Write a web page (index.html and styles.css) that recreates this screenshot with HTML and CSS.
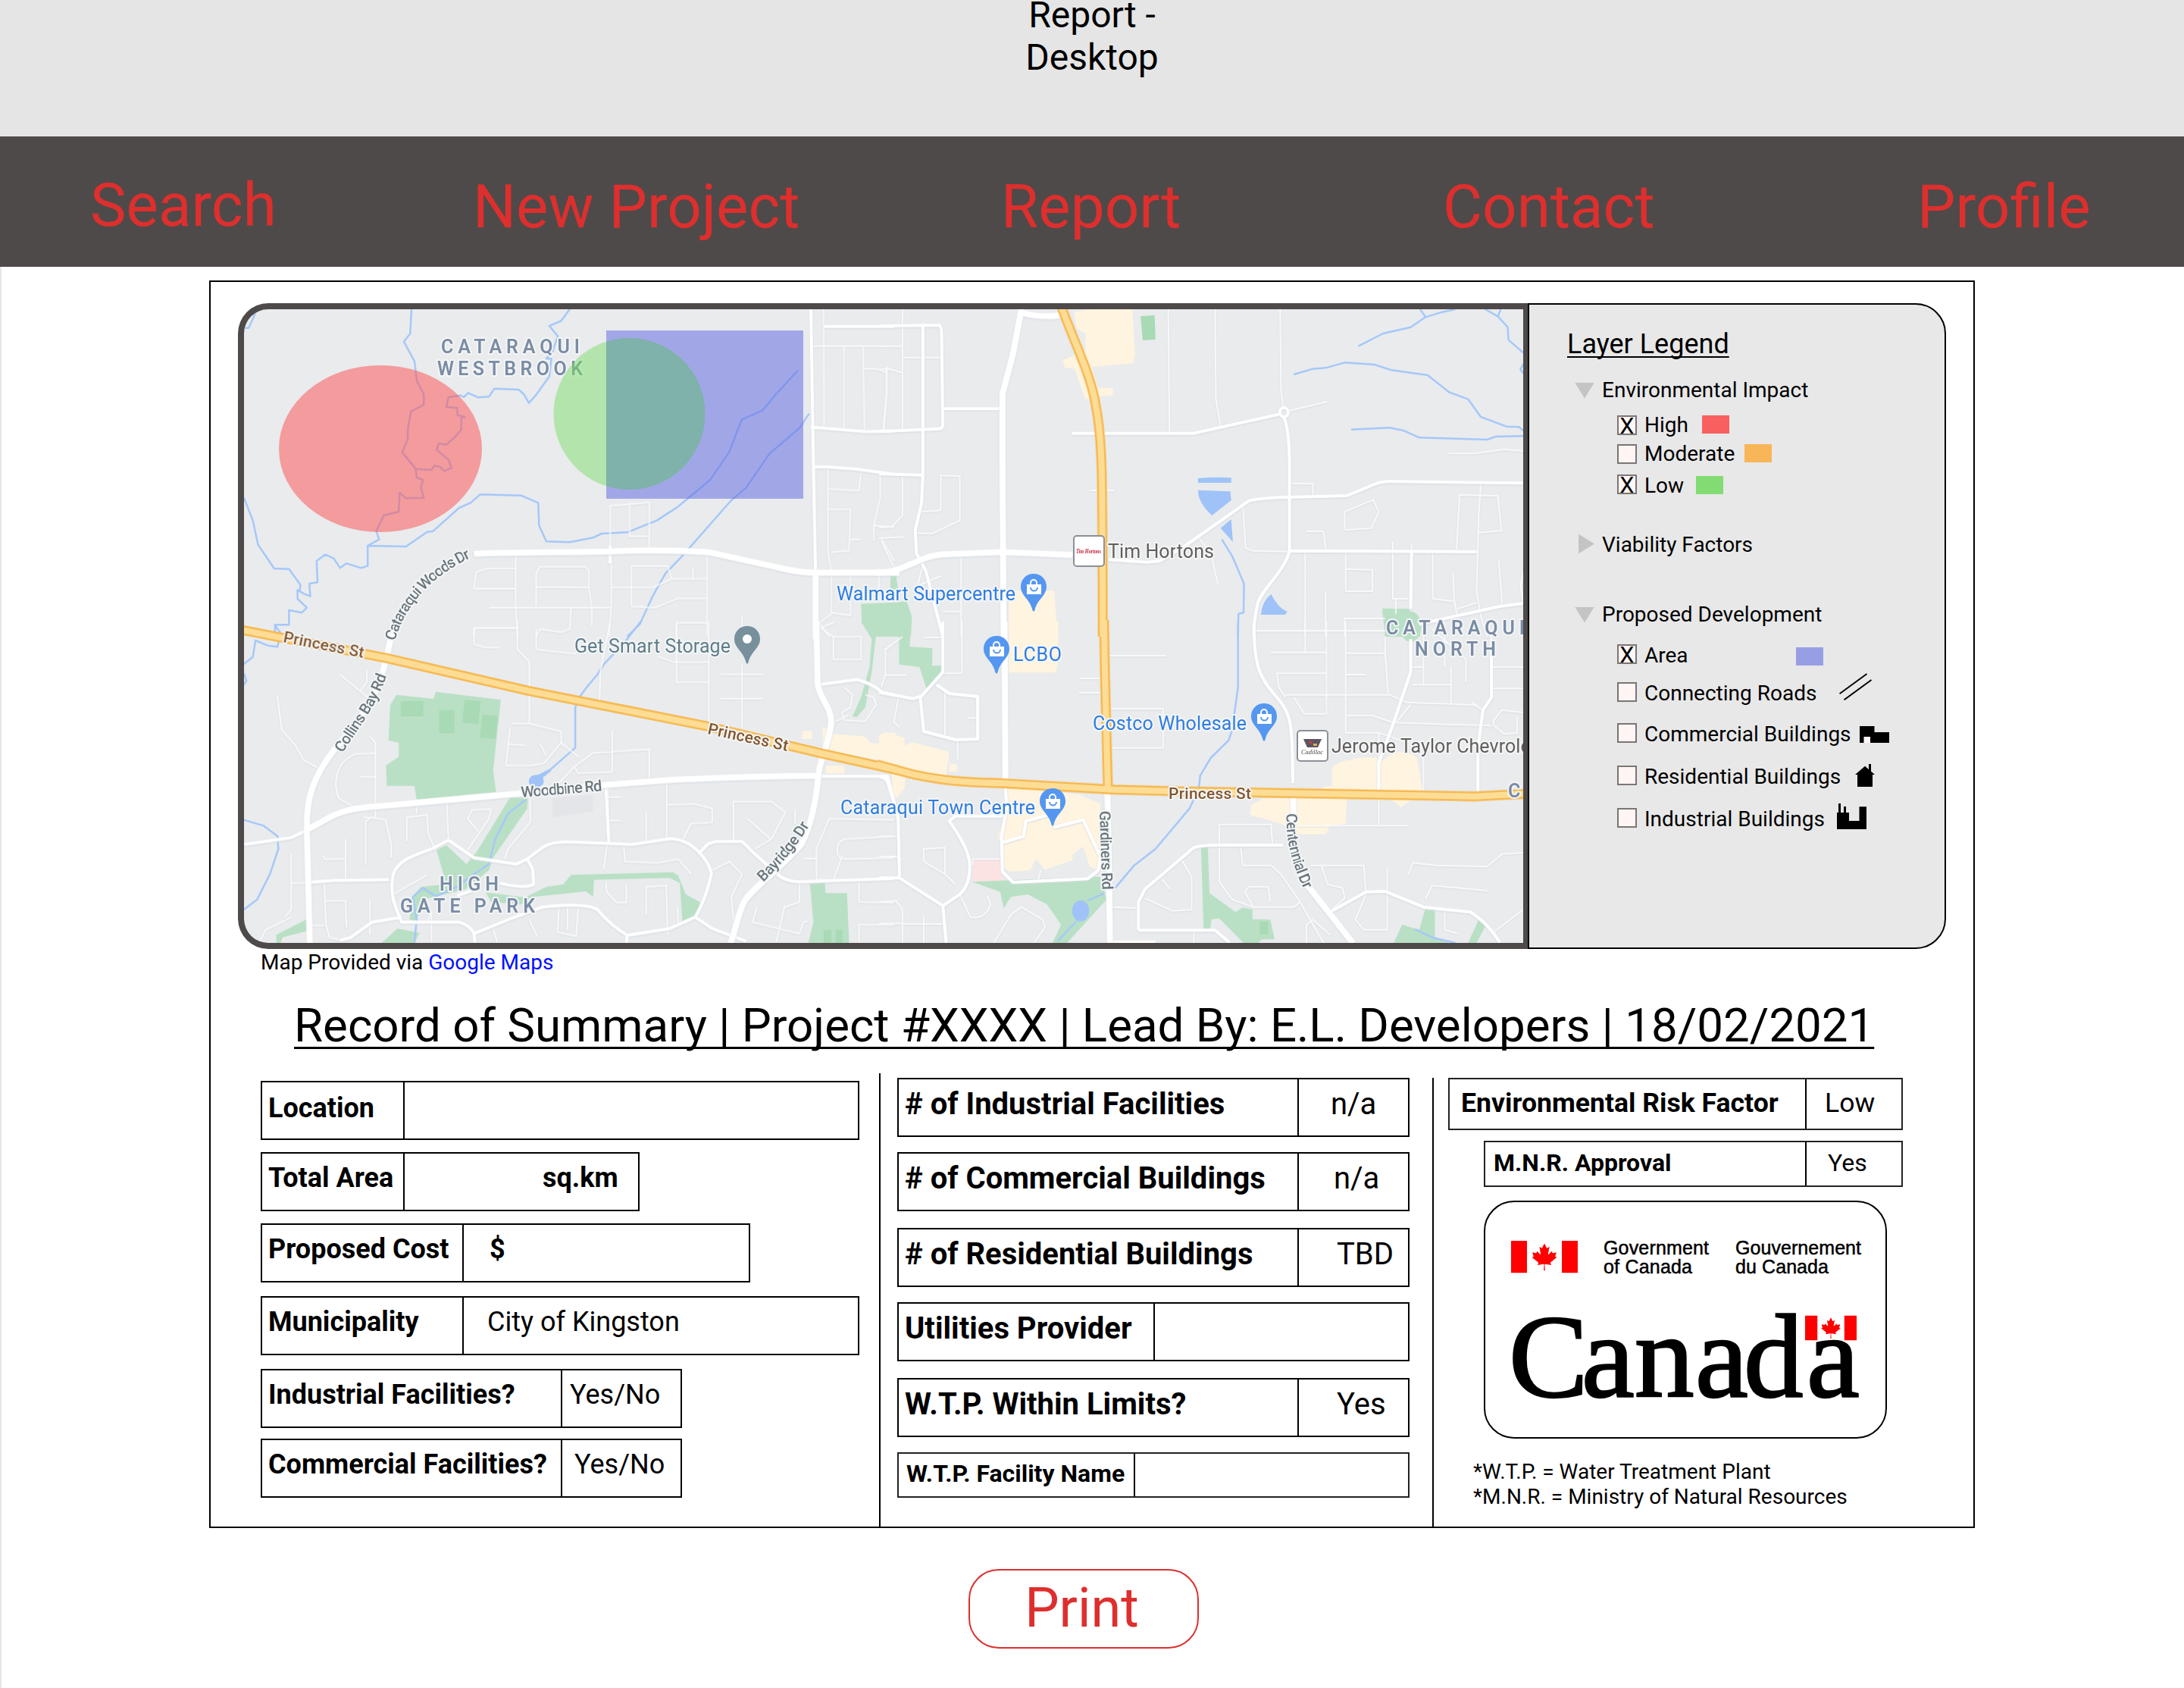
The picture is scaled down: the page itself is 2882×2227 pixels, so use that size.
FILE: index.html
```html
<!DOCTYPE html>
<html lang="en">
<head>
<meta charset="utf-8">
<title>Report - Desktop</title>
<link rel="stylesheet" href="styles.css">
</head>
<body>
<svg class="defs" aria-hidden="true">
  <symbol id="flag" viewBox="-4968 -2400 9936 4800">
    <path fill="#f00" d="M-4968-2400h2370v4800h-2370zM2598-2400h2370v4800H2598z"/>
    <path fill="#f00" d="m-90 2030 45-863a95 95 0 0 0-111-98l-859 151 116-320a65 65 0 0 0-20-73l-941-762 212-99a65 65 0 0 0 34-79l-186-572 542 115a65 65 0 0 0 73-38l105-247 423 454a65 65 0 0 0 111-57l-204-1052 327 189a65 65 0 0 0 91-27l332-652 332 652a65 65 0 0 0 91 27l327-189-204 1052a65 65 0 0 0 111 57l423-454 105 247a65 65 0 0 0 73 38l542-115-186 572a65 65 0 0 0 34 79l212 99-941 762a65 65 0 0 0-20 73l116 320-859-151a95 95 0 0 0-111 98l45 863z"/>
  </symbol>
  <symbol id="pin" viewBox="0 0 34 50">
    <path d="M17 0C7 0 0 7.500 0 17c0 12 12 16 15.500 31 .6 2 2.400 2 3 0C22 33 34 29 34 17 34 7.500 27 0 17 0z"/>
  </symbol>
  <symbol id="bag" viewBox="0 0 34 50">
    <path d="M17 0C7 0 0 7.500 0 17c0 12 12 16 15.500 31 .6 2 2.400 2 3 0C22 33 34 29 34 17 34 7.500 27 0 17 0z"/>
    <path fill="#fff" d="M8 14h19v13H8z"/>
    <path fill="none" stroke="#fff" stroke-width="2" d="M13 15v-3a4 4 0 0 1 8 0v3"/>
    <path fill="none" stroke="#5597f0" stroke-width="2" d="M13 18a4.500 4.500 0 0 0 9 0"/>
  </symbol>
</svg>

<header class="banner"><h1 class="banner-title">Report -<br>Desktop</h1></header>

<nav class="nav">
  <a class="nav-link nav-link--first">Search</a>
  <a class="nav-link">New Project</a>
  <a class="nav-link">Report</a>
  <a class="nav-link">Contact</a>
  <a class="nav-link">Profile</a>
</nav>

<main class="page">
<section class="sheet">
  <div class="viewer">
    <div class="map">
      <svg class="map-art" viewBox="322 408 1688 836">
        <!-- green space, retail blocks and ponds -->
        <g class="land">
          <g transform="translate(300 820) scale(.56122 .33333)">
            <path class="park" d="M398 290L485 306L490 278L643 310L625 590L632 675L445 705L440 650L375 650L373 570L403 535L403 480L379 470L383 330ZM665 695L707 700L705 740L625 935L615 985L560 1060L460 1100L445 1185L428 1180L435 1090L455 1050L515 1040L492 905L515 885L562 960L585 915ZM608 1072L700 1092L750 1050L790 1040L808 1003L1048 992L1060 1005L1078 1080L1113 1112L1100 1165L1070 1197L1064 1035L1040 1015L862 1022L860 1090L843 1068L720 1090L690 1120L620 1110ZM115 1240L187 1178L187 1225L130 1250L125 1272L115 1272ZM363 1272L400 1215L452 1232L440 1272ZM1370 1037L1405 1035L1407 1075L1457 1075L1462 1272L1366 1272L1378 1190ZM1490 0L1568 0L1568 40L1525 60L1515 200L1500 340L1480 378L1470 375L1490 300L1510 180L1515 70Z"/>
            <path class="park-dark" d="M408 315h53v60h-53zM498 350h36v93h-36zM558 310l38 6-6 90-38-6zM600 368l36 6-6 92-36-6zM1402 1220h18v52h-18zM1430 1220h16v52h-16z"/>
            <path class="retail" d="M1400 415L1425 445L1500 455L1512 480L1540 485L1545 445L1570 437L1570 560L1400 505ZM1352 433h23v32h-23zM1407 570h44v30h-44z"/>
            <path class="water" d="M709 630q2-25 22-23l28-25 3 8-20 28q8 36-18 38-16-2-15-26z"/>
            <path class="block" d="M765 700l95-15v65l-95 25z"/>
          </g>
          <g transform="translate(300 380) scale(.56122 .33333)">
            <path class="park" d="M1560 1130h8v70h-8zM1490 1250L1570 1245L1570 1380L1530 1380L1510 1340L1492 1325Z"/>
          </g>
          <g transform="translate(1160 380) scale(.56122 .33333)">
            <path class="retail" d="M458 95L500 84L596 84L602 265L597 298L500 312L515 395L550 395L550 425L520 428L485 440L460 320L437 315L432 285L485 250L485 180L465 160ZM305 1198L412 1198L420 1380L305 1380Z"/>
            <path class="park-dark" d="M615 112L648 108L650 204L620 207Z"/>
            <path class="park" d="M0 1250L65 1240L77 1300L75 1380L0 1380ZM27 1140L40 1138L48 1230L27 1240ZM1183 1268L1245 1270L1272 1340L1272 1380L1190 1380Z"/>
            <path class="water" d="M750 753q40-6 78-2v20h-78zM750 800L826 805L828 840L783 900Q750 850 750 800ZM803 950L828 915L832 1005ZM898 1293Q900 1240 922 1212Q940 1270 960 1280L955 1293Z"/>
          </g>
          <g transform="translate(1160 820) scale(.56122 .33333)">
            <path class="retail" d="M305 0L422 0L420 170L415 202L305 202ZM0 450L15 437L60 460L60 490L78 478L165 515L158 607L110 600L30 570L0 545ZM165 565h18v30h-18zM30 600L62 610L60 660L40 700L32 690ZM300 655L470 685L520 720L520 960L510 980L495 970L480 890L455 920L455 945L390 982L370 940L355 985L310 990L295 980L290 870L278 860L300 740ZM1065 580Q1080 550 1110 548L1120 540L1170 538L1175 560L1210 520Q1240 505 1265 540L1278 670L1228 735L1200 700L1100 700L1097 800L1060 810L1050 842L988 842L945 800L872 765L875 725L905 700L1050 700L1045 655L1065 650Z"/>
            <path class="medical" d="M220 940h65l8 94-73-2z"/>
            <path class="park" d="M0 0L75 0L72 100L125 105L125 175L147 175L145 205L112 268L95 180L47 170L47 60L0 50ZM218 1030L520 1010L535 1100L442 1272L408 1272L428 1200L395 1120L350 1080L310 1090L293 1135L285 1070ZM757 890L773 893L777 1075L838 1150L855 1132L878 1140L878 1178L920 1180L930 1258L900 1258L892 1272L857 1272L800 1175L782 1178L778 1218L763 1215ZM1210 1272L1230 1200L1270 1220L1285 1135L1307 1140L1307 1250L1340 1272ZM1385 1272L1410 1180L1427 1200L1405 1272Z"/>
            <ellipse class="park" cx="1250" cy="20" rx="25" ry="60"/>
            <path class="park-dark" d="M895 1188h20v50h-20z"/>
            <ellipse class="water" cx="474" cy="1145" rx="20" ry="42"/>
          </g>
        </g>

        <!-- streams -->
        <g class="streams">
          <path transform="translate(300 380) scale(.56122 .33333)" d="M433 84L430 180L415 212L440 290L446 370L462 420L462 462L432 488L425 550L424 600L411 650L443 716L480 720L487 703L500 708L510 724L527 712L520 680L492 640L497 615L515 620L535 590L550 560L550 515L558 510L541 503L540 475L515 470L520 432L548 425L556 432L566 415L590 433L615 430L628 398L685 402L697 420L709 455L725 425L757 350L762 280L750 280L765 250L777 190L757 150L785 130L805 84M443 716L445 750L460 760L455 790L462 830L420 832L405 810L403 885L368 900L350 962L357 995L330 1020L420 1023L470 965L484 962L545 870L572 850L594 817L690 821L731 850L733 940L750 1003L805 1006L860 988L880 972L940 967L1010 920L1060 865L1135 760L1180 650L1198 570L1210 520L1258 485L1290 420L1342 325M1368 497L1345 555L1275 655L1220 790L1185 840L1070 1060L1030 1130L1000 1220L970 1330L940 1380M330 1020L330 1100L315 1108L280 1090L265 1108L250 1070L230 1055L210 1080L212 1165L193 1170L195 1220L180 1210L165 1195L165 1230L187 1265L175 1285L145 1275L145 1333L112 1333L112 1360M39 830L60 920L72 1015L110 1110L145 1112L172 1175L170 1200M66 100L50 158L39 158"/>
          <path transform="translate(300 820) scale(.56122 .33333)" d="M112 15L125 45L118 100L95 95L66 75L60 140L39 168M39 205L45 235L39 250M972 0L935 80L885 170L870 210L845 260L825 305L818 340L818 500L750 600M702 705L660 760L630 860L615 960L580 1000L540 1050L490 1088L460 1055L436 1090L445 1180L440 1270M39 785L85 808L118 850L120 900L100 1000L70 1100L39 1140"/>
          <path transform="translate(1160 380) scale(.56122 .33333)" d="M1272 84L1285 115L1250 155L1185 180L1127 230M1285 115L1320 97L1355 84M1425 84L1455 112L1462 84M1455 112L1478 155L1480 205L1515 257M1515 300L1508 322L1515 338M975 342L1020 320L1050 316L1095 295L1165 303L1205 325L1290 345L1340 412L1385 440L1415 510L1475 548L1505 550L1515 565M1110 560L1200 553L1235 565L1270 592L1430 600L1450 588L1515 586M806 995L830 1060L858 1170L857 1285L845 1290L844 1380"/>
          <path transform="translate(1160 820) scale(.56122 .33333)" d="M844 0L844 260L830 430L822 470L780 540L755 610L752 660L730 740L650 900L600 965L555 1055M530 1075L490 1105M465 1185L420 1265M1260 1218L1300 1250L1355 1272"/>
        </g>

        <!-- local streets -->
        <g class="streets">
          <path transform="translate(300 380) scale(.56122 .33333)" d="M1402 84L1403 550M1450 230L1450 560M1495 230L1498 570M1378 230H1568M1495 320L1530 320L1550 335L1550 420L1543 560M1550 310v50M900 1020V862L992 848V1030M946 852V982H992M678 1058V1265L682 1380M580 1190H678M580 1190L585 1125L610 1110H678M726 1260V1130L735 1103H840L850 1115V1185L726 1183M850 1185L857 1265V1340M680 1265H900M615 1265H680M903 1050L903 1250L897 1380M950 1100H1035L1045 1150L1000 1185H905M950 1100V1260L1005 1265L1060 1228H1130M1045 1150H1130M1095 1105V1150M1128 1045V1380M808 1265L805 1350L785 1362L735 1350L726 1380M580 1380V1346H678M1056 1380V1325H1128M1210 1300V1380M1412 705V1040L1420 1120V1285L1465 1295V1126M1412 876H1465L1462 1040L1420 1045M1412 795L1485 802L1490 735M1535 735V830L1520 940L1568 945M1465 995H1488M1532 1126V1200M1538 995L1568 1080M1420 1290L1392 1325L1415 1380M1520 940V1000"/>
          <path transform="translate(300 820) scale(.56122 .33333)" d="M682 0V110L710 160V403M580 25H680M580 25V90L605 102L640 103M726 30V110L820 128M900 0L877 200L875 325M1132 0V410M1210 170V420M1160 208H1260M1160 305H1260M1056 0V240H1132M1010 138L1050 160H1132M1425 60L1395 25L1430 0M1425 60H1490V150H1425V60M265 210L330 300M328 195V240L312 275M117 290L128 430L160 490L180 550L212 578M335 455L348 480V720M348 520L300 525C250 560 250 650 262 700L300 735M312 615H348M668 403H710L785 435V480L745 560L715 570H655L665 420M660 485L700 490M735 485L750 530M785 480L825 535M905 430V595L825 600L815 575L860 520L992 505V620M815 575L780 640M516 720L520 865M445 705V760M348 735V775M325 960V790L340 775L372 785L385 880V935M422 870V775L470 765L472 840L490 905M150 920V1140L135 1170M150 1170L90 1220L75 1272M278 860V1035M278 938L230 940L225 925M590 830L565 780L575 745L620 742L615 780L565 905M712 705V795L660 900L652 940M895 655L897 875M895 695H925M895 787H925M1033 640V855M1033 725L1100 722L1140 740V795L1090 800L1072 860M985 755V865M1190 870V712H1278L1312 755L1280 860L1240 900M1278 862L1222 780M1335 745V800M228 1035L232 1200L240 1250L270 1262M230 1105H278L280 1210M200 1203H228M335 1100V1240M385 1085L420 1050L470 1003M470 1190L480 1150V1270M932 885L935 950L1010 955L1060 940L1090 1000M893 880L885 980M890 1030L892 1070L915 1112H938V1045M1060 1190L1058 1130M985 1160V1050L1032 1045L1035 1240M780 1120L776 1230L820 1245L825 1135M800 1120V1220M625 1215L635 1272M710 1180L728 1245M1140 985L1180 950L1210 1000L1185 1090L1190 1180M1245 1130L1235 1190L1345 1235L1355 1190L1365 1185M1345 1035V1110L1310 1130L1290 1272M1485 1030V1110L1568 1112M1485 1200H1568M1485 1200V1272M1568 935L1450 940Q1430 935 1435 890Q1440 860 1460 860L1568 850M1415 780L1568 785M1415 780L1385 900V1020M1385 1020L1425 1025L1445 930M1355 938H1388M1430 395L1460 370M1450 260L1470 290L1465 340L1445 360L1450 390L1500 395L1525 330L1520 300L1500 290M340 775H320M150 1035H228"/>
          <path transform="translate(1160 380) scale(.56122 .33333)" d="M55 84V560M0 230H55M55 275H145M0 325L18 318L55 335M18 318V420L10 560M145 148L150 480M680 84L683 578M790 84L792 440L803 545M943 84L945 400L950 470M965 485L1053 450M495 801H553M55 740V900L30 945L0 948M100 885L145 880V742L190 745V920L125 972L85 970M0 990L60 985M5 1000L35 1105M193 1060V1380M150 1280H193M105 1085L90 1180L145 1140M965 773L1020 775V825M855 850L862 1030L880 1040L965 1043M1340 655L1400 655L1470 638L1515 645M1095 955V885L1162 838L1175 885L1158 950L1095 958M1005 963L1045 963L1050 1035M1415 770L1410 900L1405 1200L1415 1300L1430 1380M1358 1035L1365 818L1455 823L1463 960L1410 968M1002 1045V1380M1050 1200V1380M1097 1045V1200H1160V1115L1097 1112M1208 1005V1230H1245M1302 1045V1230L1350 1240M1350 1130L1352 1230L1362 1320M1457 1075L1465 1250M1515 1130L1508 1180L1515 1245M1405 1245L1360 1270M882 1357H1190M1095 1380V1308H1190M750 985L780 1050L797 1175M1252 1015V1045M1215 1230V1290"/>
          <path transform="translate(1160 820) scale(.56122 .33333)" d="M883 37H1190M540 135H675M470 225H522M470 282H522M540 345H668V500H545M150 0V190M105 63H150M195 0V205L150 205M55 60L15 110V210L5 260M15 212H65M155 270V450M232 382H207M45 305L35 400L48 418M185 470V545M75 590V630M1002 0V120M1052 0V365L1000 365L975 300M920 122H1052V205H935M1097 0V440L1175 440L1225 470M1097 125H1190V60M1190 125L1197 290M1097 210H1145M955 290H1200L1240 320L1400 330L1420 350M935 205L940 260L955 300M1097 372H1160L1210 400L1440 412M1255 180H1280V250M1255 250H1345V180M1345 250V330M1280 0V180M1330 0V180M1440 50V180H1515M1440 180V265H1515M1440 265V310M1415 345L1395 320M1515 360L1465 350L1445 390V410L1470 445L1500 440V380M1250 330L1215 400M1300 30L1380 150V240M1280 540V670M1408 500V680M975 640H973M800 885V803H922L925 885M850 885L855 965H922L945 1000L990 1110L975 1130H880L830 1100L800 1030V890M880 1130L860 1070L870 1050H915L920 1110M985 808H1245M1175 700V808M665 1020L685 1060M712 945L735 1010V1140L690 1145L625 1095M550 1130L610 1135M740 1230V1272M990 1110L1045 1272M1005 1272V1200L1020 1180L1060 1240M1015 965H1140L1145 1085M1040 965L1055 1040L1090 1055L1095 1095L1065 1140M1195 975V1220H1140L1120 1180L1145 1080M1515 915L1465 920L1430 970L1310 965L1255 955L1245 1000M1430 1065L1300 1045L1285 1100M1515 1140L1445 1230M1330 1140V1220L1360 1235M0 850H45M0 930H45M45 780V930L48 1010M105 950V900L155 895V1000L105 950M155 1000L180 1040M0 1110L40 1105L55 1140V1272M0 1195H55M105 1165V1272M55 1197H155M190 1080L215 1170Q250 1180 262 1120L255 1085M270 1272L310 1160L335 1130L385 1180L390 1210L365 1272M220 965V940H285M380 985L375 1020M1175 440V540"/>
        </g>

        <!-- collector roads -->
        <g class="collectors">
          <path transform="translate(300 380) scale(.56122 .33333)" d="M1372 84L1378 700L1383 1126M1372 550L1500 568L1568 566M1378 708L1412 708L1480 717L1568 737M1403 152H1568M900 1020V1090"/>
          <path transform="translate(300 820) scale(.56122 .33333)" d="M39 882L150 855L200 815M1390 612L1530 612Q1552 615 1555 650L1568 720M192 1032L250 1025L380 1022M520 865L480 900C430 930 400 950 390 1000C380 1080 395 1130 410 1190L545 1190Q570 1200 580 1235L582 1272M520 865L580 935L680 960L705 940L740 895Q760 872 800 872L890 878L950 882L1040 860Q1080 860 1110 915Q1135 960 1138 1000Q1125 1100 1100 1170L1040 1215L940 1242Q900 1200 870 1140Q840 1110 740 1130L660 1180L580 1235M705 940L718 980L720 1040Q700 1060 640 1035M410 1170L340 1190L290 1250L265 1262M1110 915L1130 880L1150 870L1210 870L1240 920L1300 1010Q1320 1030 1345 1030L1568 1017M1100 1170L1140 1215L1220 1265M1390 250L1480 230Q1510 240 1540 280L1568 290M940 1242L938 1272M540 1085L575 1065M890 650L897 875"/>
          <path transform="translate(1160 380) scale(.56122 .33333)" d="M0 150L140 147Q147 150 147 180L150 545Q148 558 135 558L0 568M103 148V740L100 850L85 960L88 1050L110 1120L130 1250L150 1380M0 735L100 740M150 478H288M453 575L740 575L940 500M540 1075L630 1085L660 1080L720 1020L870 842Q900 830 960 828L1100 822L1175 770L1195 765L1515 772M952 510Q965 570 965 700L965 1040C955 1120 900 1190 890 1250C880 1330 880 1360 882 1380M965 1040L1405 1044M1252 1045L1250 1270M1270 1330L1460 1260L1515 1248"/>
          <ellipse transform="translate(1160 380) scale(.56122 .33333)" cx="952" cy="492" rx="10" ry="18"/>
          <path transform="translate(1160 820) scale(.56122 .33333)" d="M150 0L150 200L100 295L80 305L0 280M135 250L165 285L232 297V465L180 468L105 435L97 300M0 612H20L30 680L45 780L48 1010M0 1015H48L150 1125L190 1080Q215 1040 213 960Q212 900 165 790L180 770H290M150 1125L158 1272M297 655L300 740L288 850L290 990L315 1032L490 1018L515 985L520 930L480 785L410 815M290 875L340 850L345 790L400 765M882 0C880 200 900 230 945 320C970 380 972 420 973 640M610 1222V1110L625 1060L740 895Q760 883 800 885L950 885M610 1222H790L825 1272M1060 1150L1145 1070L1190 1068L1280 1130L1390 1150Q1430 1190 1460 1272M1250 70V200L1210 400L1175 560V680M1440 70V300L1420 350L1408 500V680M545 1268H650"/>
        </g>

        <!-- arterials -->
        <g class="arterials">
          <path transform="translate(300 380) scale(.56122 .33333)" d="M580 1052C600 1045 800 1047 900 1042C1000 1035 1080 1040 1130 1045L1320 1115Q1350 1126 1380 1126L1580 1126M392 1350L385 1380M1383 1126V1390"/>
          <path transform="translate(300 820) scale(.56122 .33333)" d="M392 0L375 140L360 230C340 330 290 430 250 510C200 620 185 700 187 830L194 1275M187 825L240 775C280 740 320 735 360 730L690 680L880 648L1030 628Q1200 612 1390 610M1385 0L1388 250C1395 310 1420 340 1420 400C1415 480 1395 540 1390 600C1385 700 1375 800 1350 880C1300 980 1230 1060 1215 1110C1200 1160 1195 1220 1183 1275"/>
          <path transform="translate(1160 380) scale(.56122 .33333)" d="M335 80L315 260L290 420L290 700L293 1390M340 100Q380 118 425 108M-10 1126Q30 1126 50 1110L110 1068Q130 1055 160 1053L290 1045L455 1056"/>
          <path transform="translate(1160 820) scale(.56122 .33333)" d="M295 0L297 640M537 680L540 930L543 1275M974 690V760C955 850 985 1000 1015 1060L1115 1275"/>
        </g>

        <!-- highways: casing below, fill above -->
        <g class="highways">
          <g class="highway-case">
            <path transform="translate(1160 380) scale(.56122 .33333)" d="M430 80C460 220 500 350 510 470C525 600 525 700 526 1380"/>
            <path transform="translate(300 820) scale(.56122 .33333)" d="M30 32L375 145L710 275L1130 415L1400 523L1575 588"/>
            <path transform="translate(1160 820) scale(.56122 .33333)" d="M529 -5L531 200L538 650M-5 566L80 605C150 630 200 637 290 640L550 665L700 672L1000 680L1400 692L1520 682"/>
          </g>
          <g class="highway-fill">
            <path transform="translate(1160 380) scale(.56122 .33333)" d="M430 80C460 220 500 350 510 470C525 600 525 700 526 1380"/>
            <path transform="translate(300 820) scale(.56122 .33333)" d="M30 32L375 145L710 275L1130 415L1400 523L1575 588"/>
            <path transform="translate(1160 820) scale(.56122 .33333)" d="M529 -5L531 200L538 660M-5 566L80 605C150 630 200 637 290 640L550 665L700 672L1000 680L1400 692L1520 682"/>
          </g>
        </g>

        <!-- districts -->
        <g class="district">
          <text x="582" y="466" textLength="183">CATARAQUI</text>
          <text x="577" y="495" textLength="192">WESTBROOK</text>
          <text x="1829" y="837" textLength="183">CATARAQUI</text>
          <text x="1867" y="865" textLength="107">NORTH</text>
          <text x="580" y="1175" textLength="78">HIGH</text>
          <text x="528" y="1204" textLength="178">GATE PARK</text>
          <text x="1990" y="1052">C</text>
        </g>

        <!-- street names -->
        <g class="street-name">
          <path id="woods" class="guide" d="M521 846Q543 768 636 729"/>
          <path id="collins" class="guide" d="M452 994C478 952 500 928 514 880"/>
          <path id="bayridge" class="guide" d="M1007 1164Q1052 1120 1073 1080"/>
          <path id="centennial" class="guide" d="M1698 1073Q1695 1125 1726 1184"/>
          <text><textPath href="#woods" textLength="154">Cataraqui Woods Dr</textPath></text>
          <text><textPath href="#collins" textLength="118">Collins Bay Rd</textPath></text>
          <text><textPath href="#bayridge" textLength="97">Bayridge Dr</textPath></text>
          <text><textPath href="#centennial" textLength="104">Centennial Dr</textPath></text>
          <text transform="translate(688 1052) rotate(-4.700)" textLength="107">Woodbine Rd</text>
          <text transform="translate(1451 1070) rotate(88)" textLength="104">Gardiners Rd</text>
        </g>
        <g class="highway-name">
          <text transform="translate(373 847) rotate(11.200)" textLength="108">Princess St</text>
          <text transform="translate(933 968) rotate(12.300)" textLength="108">Princess St</text>
          <text x="1542" y="1054" textLength="109">Princess St</text>
        </g>

        <!-- places -->
        <g class="place">
          <text x="1104" y="792" textLength="236">Walmart Supercentre</text>
          <text x="1337" y="872" textLength="64">LCBO</text>
          <text x="1442" y="963" textLength="203">Costco Wholesale</text>
          <text x="1109" y="1074" textLength="257">Cataraqui Town Centre</text>
          <text class="place--storage" x="758" y="861" textLength="206">Get Smart Storage</text>
          <text class="place--brand" x="1462" y="736" textLength="140">Tim Hortons</text>
          <text class="place--brand" x="1757" y="993" textLength="271">Jerome Taylor Chevrolet</text>
        </g>
        <g class="pins">
          <use href="#bag" x="1347" y="757" width="34" height="50"/>
          <use href="#bag" x="1298" y="839" width="34" height="50"/>
          <use href="#bag" x="1651" y="928" width="34" height="50"/>
          <use href="#bag" x="1372" y="1040" width="34" height="50"/>
          <use class="pin--storage" href="#pin" x="969" y="826" width="34" height="50"/>
          <circle cx="986" cy="843" r="6" fill="#fff"/>
        </g>
        <g class="badges">
          <rect x="1417" y="707" width="40" height="40" rx="4"/>
          <rect x="1712" y="964" width="40" height="40" rx="4"/>
          <text class="badge-tim" x="1420" y="730" textLength="33" lengthAdjust="spacingAndGlyphs">Tim Hortons</text>
          <path fill="#5b5560" d="M1720 975h24l-5 11h-14z"/>
          <path fill="#b8434a" d="M1727 978h5v3h-5z"/><path fill="#d9b24a" d="M1733 981h5v3h-5z"/>
          <text class="badge-car" x="1717" y="995" textLength="29" lengthAdjust="spacingAndGlyphs">Cadillac</text>
        </g>

        <!-- project overlays -->
        <ellipse cx="502" cy="592" rx="134" ry="110" fill="#fd4b4d" opacity=".5"/>
        <path d="M800 436h260v222H800z" fill="#5963df" opacity=".5"/>
        <circle cx="830.500" cy="546" r="100" fill="#7bdd69" opacity=".5"/>
        <path d="M800 450.800A100 100 0 1 1 800 641.200z" fill="#4372b1" opacity=".2"/>
      </svg>
    </div>

    <aside class="legend">
      <h2 class="legend-title">Layer Legend</h2>
      <div class="group group--impact"><i class="caret caret--down"></i><span>Environmental Impact</span></div>
      <div class="layer layer--high"><span class="check">X</span><span class="layer-name">High</span><i class="swatch"></i></div>
      <div class="layer layer--moderate"><span class="check"></span><span class="layer-name">Moderate</span><i class="swatch"></i></div>
      <div class="layer layer--low"><span class="check">X</span><span class="layer-name">Low</span><i class="swatch"></i></div>
      <div class="group group--viability"><i class="caret caret--right"></i><span>Viability Factors</span></div>
      <div class="group group--development"><i class="caret caret--down"></i><span>Proposed Development</span></div>
      <div class="layer layer--area"><span class="check">X</span><span class="layer-name">Area</span><i class="swatch"></i></div>
      <div class="layer layer--roads"><span class="check"></span><span class="layer-name">Connecting Roads</span>
        <svg width="44" height="36" viewBox="0 0 44 36"><path d="M.5 27.300 36.500 1M6.500 35.300 42.500 9" stroke="#000" stroke-width="2"/></svg></div>
      <div class="layer layer--commercial"><span class="check"></span><span class="layer-name">Commercial Buildings</span>
        <svg width="40" height="22" viewBox="0 0 40 22"><path d="M0 0h19.500v8H39v14H0z"/><path fill="#fff5f4" d="M5.500 14h8.500v8H5.500z"/></svg></div>
      <div class="layer layer--residential"><span class="check"></span><span class="layer-name">Residential Buildings</span>
        <svg width="28" height="30" viewBox="0 0 28 30"><path d="M0 14 13 2.700 26 14zM3 14h20v16H3zM18 0h3v12h-3z"/></svg></div>
      <div class="layer layer--industrial"><span class="check"></span><span class="layer-name">Industrial Buildings</span>
        <svg width="40" height="34" viewBox="0 0 40 34"><path d="M0 34V12h2V0h3v12h4V4h3v8h4v11h13.500V4.300H39V34z"/></svg></div>
    </aside>
  </div>

  <p class="credit">Map Provided via <a class="credit-link">Google Maps</a></p>
  <h2 class="summary-title">Record of Summary | Project #XXXX | Lead By: E.L. Developers | 18/02/2021</h2>

  <div class="summary">
    <div class="col col--left">
      <div class="field field--location"><b class="field-name">Location</b><span class="field-value"></span></div>
      <div class="field field--area"><b class="field-name">Total Area</b><b class="field-value">sq.km</b></div>
      <div class="field field--cost"><b class="field-name">Proposed Cost</b><b class="field-value">$</b></div>
      <div class="field field--city"><b class="field-name">Municipality</b><span class="field-value">City of Kingston</span></div>
      <div class="field field--industrial"><b class="field-name">Industrial Facilities?</b><span class="field-value">Yes/No</span></div>
      <div class="field field--commercial"><b class="field-name">Commercial Facilities?</b><span class="field-value">Yes/No</span></div>
    </div>

    <div class="col col--mid">
      <div class="field field--n1"><b class="field-name"># of Industrial Facilities</b><span class="field-value">n/a</span></div>
      <div class="field field--n2"><b class="field-name"># of Commercial Buildings</b><span class="field-value">n/a</span></div>
      <div class="field field--n3"><b class="field-name"># of Residential Buildings</b><span class="field-value">TBD</span></div>
      <div class="field field--utilities"><b class="field-name">Utilities Provider</b><span class="field-value"></span></div>
      <div class="field field--limits"><b class="field-name">W.T.P. Within Limits?</b><span class="field-value">Yes</span></div>
      <div class="field field--plant"><b class="field-name">W.T.P. Facility Name</b><span class="field-value"></span></div>
    </div>

    <div class="col col--right">
      <div class="field field--risk"><b class="field-name">Environmental Risk Factor</b><span class="field-value">Low</span></div>
      <div class="field field--mnr"><b class="field-name">M.N.R. Approval</b><span class="field-value">Yes</span></div>
      <div class="seal">
        <svg width="528" height="310" viewBox="1960 1586 528 310">
          <use href="#flag" x="1994" y="1637" width="88" height="42.500"/>
          <g class="seal-text">
            <text x="2116" y="1655" textLength="139">Government</text>
            <text x="2116" y="1679.500" textLength="117">of Canada</text>
            <text x="2290" y="1655" textLength="166">Gouvernement</text>
            <text x="2290" y="1679.500" textLength="123">du Canada</text>
          </g>
          <text class="wordmark" x="1991 2087 2157 2237 2301 2384" y="1842">Canada</text>
          <use href="#flag" x="2382" y="1735.500" width="68" height="33"/>
        </svg>
      </div>
      <p class="notes">*W.T.P. = Water Treatment Plant<br>*M.N.R. = Ministry of Natural Resources</p>
    </div>
  </div>
</section>

<button class="print">Print</button>
</main>
</body>
</html>
```
FILE: styles.css
```css
* { box-sizing: border-box; }
body { margin: 0; background: #fff; color: #000; font-family: Roboto, "Liberation Sans", sans-serif; }
h1, h2, p { margin: 0; font-weight: 400; }
.defs { display: block; width: 0; height: 0; }

/* banner and navigation */
.banner { height: 180px; background: #e5e5e5; text-align: center; overflow: hidden; }
.banner-title { margin-top: -8px; font-size: 48px; line-height: 56px; }
.nav {
  display: grid; grid-template-columns: 505px 697px 583px 626px auto; align-items: center;
  height: 172px; padding: 13px 0 0 119px; background: #4e4a49;
}
.nav-link { color: #dd2f2e; font-size: 80px; line-height: 94px; white-space: nowrap; }
.nav-link--first { padding-bottom: 4px; }

.page { height: 1875px; padding-top: 18px; border-left: 2px solid #e5e5e5; }
.sheet { width: 2330px; height: 1646px; margin-left: 274px; padding: 28px 0 0 36px; border: 2px solid #000; }

/* map and legend */
.viewer { display: flex; height: 852px; }
.map {
  width: 1702px; flex: none; overflow: hidden; background: #e9ebed;
  border: 8px solid #4e4a49; border-right-width: 6px; border-radius: 40px 0 0 40px;
}
.map-art { display: block; width: 1688px; height: 836px; }
.map-art path, .map-art ellipse { vector-effect: non-scaling-stroke; }
.park { fill: #b9e0c5; }
.park-dark { fill: #a8dab5; }
.retail { fill: #fef4e0; }
.medical { fill: #fbe3e4; }
.block { fill: #e3e5e9; }
.water { fill: #9fc3f8; }
.streams { fill: none; stroke: #a6c8f8; stroke-width: 2.500; stroke-linejoin: round; }
.streets, .collectors, .arterials { fill: none; stroke: #fff; stroke-linejoin: round; filter: drop-shadow(0 1px 1px #d6dae0); }
.streets { stroke-width: 2; opacity: .7; }
.collectors { stroke-width: 4; }
.arterials { stroke-width: 8; }
.highways { fill: none; stroke-linejoin: round; }
.highway-case { stroke: #f7b84f; stroke-width: 13; }
.highway-fill { stroke: #fddd95; stroke-width: 8; }
.guide { fill: none; stroke: none; }
.district text, .street-name text, .highway-name text, .place text {
  paint-order: stroke; stroke: #f3f5f6; stroke-width: 4px; stroke-linejoin: round;
}
.district { fill: #7a8ca4; font-size: 25px; font-weight: 600; }
.street-name { fill: #6a767c; font-size: 20px; font-weight: 500; }
.highway-name { fill: #84552b; font-size: 21px; font-weight: 500; }
.place { fill: #2f7de1; font-size: 25px; }
.place--storage { fill: #5f7d88; }
.place--brand { fill: #615e5b; }
.pins { fill: #5597f0; }
.pin--storage { fill: #78909c; }
.badges rect { fill: #fff; stroke: #8b9096; stroke-width: 2; }
.badge-tim { fill: #c8203a; font: italic bold 8px "Liberation Serif", serif; }
.badge-car { fill: #444; font: italic 9px "Liberation Serif", serif; }

.legend {
  width: 552px; flex: none; padding: 31px 0 0 50px; background: #e8e8e8;
  border: 2px solid #000; border-radius: 0 40px 40px 0;
}
.legend-title { font-size: 36px; line-height: 42px; text-decoration: underline 2px; text-decoration-skip-ink: none; text-underline-offset: 4px; }
.group, .layer { display: flex; height: 26px; font-size: 28px; line-height: 28px; white-space: nowrap; }
.group { padding-left: 10px; align-items: center; }
.group--impact { margin-top: 27px; }
.group--viability { margin-top: 54px; }
.group--development { margin-top: 66px; }
.caret { width: 26px; margin-right: 10px; }
.caret::before { content: ""; display: block; background: #c4c4c4; }
.caret--down::before { width: 26px; height: 21px; clip-path: polygon(0 0, 100% 0, 50% 100%); }
.caret--right::before { width: 21px; height: 26px; margin: -3px 0 0 5px; clip-path: polygon(0 0, 100% 50%, 0 100%); }
.layer { padding-left: 66px; align-items: flex-start; margin-top: 28px; }
.layer svg { flex: none; }
.check {
  flex: none; width: 26px; height: 26px; margin-right: 10px; border: 2px solid #7b7573;
  background: #fff5f4; font-size: 30px; line-height: 23px; text-align: center;
}
.layer-name { flex: none; padding-top: 1px; }
.swatch { width: 36px; height: 24px; flex: none; }
.layer--high { margin-top: 20px; }
.layer--high .layer-name { width: 76px; padding: 0; margin-top: -1px; }
.layer--high .swatch { background: #f85f5f; }
.layer--moderate { margin-top: 12px; }
.layer--moderate .layer-name { width: 132px; padding: 0; margin-top: -1px; }
.layer--moderate .swatch { background: #f8b659; }
.layer--low { margin-top: 14px; }
.layer--low .layer-name { width: 68px; }
.layer--low .swatch { margin-top: 2px; background: #82dc73; }
.layer--area { margin-top: 26px; }
.layer--area .layer-name { width: 200px; }
.layer--area .swatch { margin-top: 4px; background: #989ee4; }
.layer--roads { margin-top: 24px; }
.layer--roads .layer-name { width: 257px; }
.layer--roads svg { margin-top: -12px; }
.layer--commercial .layer-name { width: 284px; }
.layer--commercial svg { margin-top: 4px; }
.layer--residential { margin-top: 30px; }
.layer--residential .layer-name { width: 278px; }
.layer--residential svg { margin-top: -2px; }
.layer--industrial { margin-top: 30px; }
.layer--industrial .layer-name { width: 254px; }
.layer--industrial svg { margin-top: -6px; }

.credit { margin: 2px 0 0 30px; font-size: 28px; line-height: 32px; }
.credit-link { color: #0010ff; }
.summary-title {
  width: max-content; margin: 32px 0 0 74px; font-size: 61.85px; line-height: 70px; white-space: nowrap;
  text-decoration: underline 3px; text-decoration-skip-ink: none; text-underline-offset: 7px;
}

/* summary table */
.summary { display: flex; height: 598px; margin-top: 28px; }
.col { display: flex; flex-direction: column; align-items: flex-start; }
.field { display: flex; height: 78px; border: 2px solid #000; font-size: 36px; line-height: 42px; white-space: nowrap; }
.field-name, .field-value { display: flex; align-items: center; padding-bottom: 10px; }
.field-name { flex: none; padding-left: 8px; border-right: 2px solid #000; }
.col--left { width: 848px; padding: 10px 0 0 30px; border-right: 2px solid #000; }
.field--location { width: 790px; }
.field--location .field-name { width: 188px; padding-bottom: 6px; }
.field--area { width: 500px; margin-top: 16px; }
.field--area .field-name { width: 188px; }
.field--area .field-value { padding-left: 182px; }
.field--cost { width: 646px; margin-top: 16px; }
.field--cost .field-name { width: 266px; }
.field--cost .field-value { padding-left: 34px; }
.field--city { width: 790px; margin-top: 18px; }
.field--city .field-name { width: 266px; }
.field--city .field-value { padding-left: 31px; }
.field--industrial { width: 556px; margin-top: 18px; }
.field--industrial .field-name { width: 396px; }
.field--industrial .field-value { padding-left: 10px; }
.field--commercial { width: 556px; margin-top: 14px; }
.field--commercial .field-name { width: 396px; }
.field--commercial .field-value { padding-left: 16px; }

.col--mid { width: 728px; padding: 6px 0 0 22px; }
.col--mid .field { width: 676px; margin-top: 22px; font-size: 40px; }
.col--mid .field-name, .col--mid .field-value { padding-bottom: 8px; }
.col--mid .field-name { width: 528px; padding-left: 8px; }
.col--mid .field--n1 { margin-top: 0; }
.field--n1 .field-value { padding-left: 42px; }
.col--mid .field--n2 { margin-top: 20px; }
.field--n2 .field-value { padding-left: 46px; }
.field--n3 .field-value { padding-left: 50px; }
.col--mid .field--utilities { margin-top: 20px; }
.col--mid .field--utilities .field-name { width: 338px; }
.field--limits .field-value { padding-left: 50px; }
.col--mid .field--plant { height: 60px; margin-top: 20px; font-size: 32px; border-color: #222; }
.col--mid .field--plant .field-name { width: 312px; padding: 0 0 5px 10px; }

.col--right { margin-top: 6px; padding-left: 19px; border-left: 2px solid #000; }
.field--risk { width: 600px; height: 69px; font-size: 35.6px; border-color: #222; }
.field--risk .field-name { width: 471px; padding: 0 0 3px 15px; }
.field--risk .field-value { padding: 0 0 3px 24px; }
.field--mnr { width: 553px; height: 61px; margin: 14px 0 0 47px; font-size: 32px; border-color: #222; }
.field--mnr .field-name { width: 424px; padding: 0 0 4px 11px; }
.field--mnr .field-value { padding: 0 0 4px 28px; }
.seal { width: 532px; height: 314px; margin: 18px 0 0 47px; border: 2px solid #000; border-radius: 40px; }
.seal svg { display: block; }
.seal-text { font: 25px "Liberation Sans", Arial, sans-serif; stroke: #000; stroke-width: .5px; }
.wordmark { font: 157px "Liberation Serif", "Times New Roman", serif; stroke: #000; stroke-width: 2.500px; }
.notes { margin: 28px 0 0 33px; font-size: 28px; line-height: 32.500px; }

.print {
  display: block; width: 304px; height: 105px; margin: 54px 0 0 1276px; padding: 0 5px 2px 0; background: #fff;
  border: 2px solid #dd2f2e; border-radius: 40px; color: #dd2f2e; font: 72px/84px Roboto, "Liberation Sans", sans-serif;
}
```
